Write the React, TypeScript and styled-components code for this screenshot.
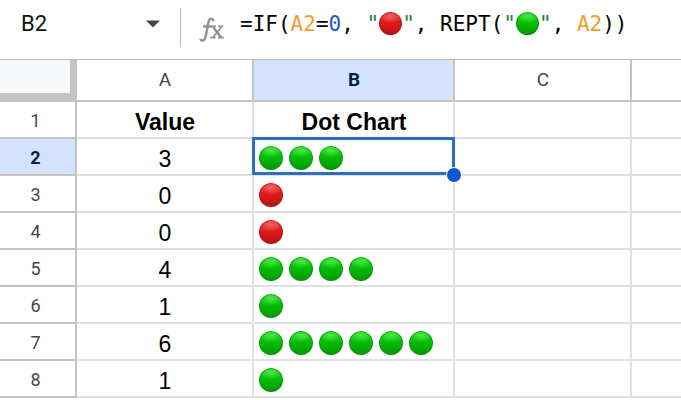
import React from 'react';
import styled, { createGlobalStyle, css } from 'styled-components';

const GlobalStyle = createGlobalStyle`
  * { box-sizing: border-box; }
  body { margin: 0; background: #fff; color: #000; overflow: hidden; font-family: "Liberation Sans", Arial, sans-serif; }
`;

const Sheet = styled.main`
  min-height: 100vh;
`;

const FormulaBar = styled.div`
  display: flex;
  align-items: center;
  height: 60px;
  padding: 0 0 12px 21px;
  border-bottom: 1px solid #bdbdbd;
`;

const NameInput = styled.input`
  width: 119px;
  height: 28px;
  padding: 0;
  border: 0;
  outline: 0;
  background: transparent;
  color: #111;
  font: 400 22px/28px Roboto, sans-serif;
`;

const MenuButton = styled.button`
  display: flex;
  align-items: center;
  justify-content: center;
  width: 26px;
  height: 26px;
  padding: 0;
  border: 0;
  background: transparent;
`;

const Divider = styled.span`
  align-self: flex-end;
  width: 1px;
  height: 39px;
  margin: 0 18px 0 14px;
  background: #bdbdbd;
`;

const FunctionIcon = styled.svg`
  flex: none;
  align-self: flex-end;
  width: 26px;
  height: 26px;
  margin: 0 15px 4px 0;
  fill: none;
  stroke: #929292;
`;

const Formula = styled.div`
  display: flex;
  align-items: center;
  flex: 1;
  min-width: 0;
  height: 28px;
  outline: 0;
  white-space: pre;
  font: 400 21px/28px "DejaVu Sans Mono", monospace;
`;

const Token = styled.span<{ $kind?: 'range' | 'number' | 'string' }>`
  color: ${({ $kind }) =>
    $kind === 'range' ? '#f09d2c' : $kind === 'number' ? '#1a56cc' : $kind === 'string' ? '#188038' : '#000'};
`;

type DotColor = 'green' | 'red';

const Dot = styled.span<{ $color: DotColor; $inline?: boolean }>`
  flex: none;
  width: ${({ $inline }) => ($inline ? 23 : 24)}px;
  height: ${({ $inline }) => ($inline ? 23 : 24)}px;
  border-radius: 50%;
  ${({ $color }) =>
    $color === 'green'
      ? css`
          background: radial-gradient(ellipse 52% 30% at 50% 18%, #48ec44, #48ec4400),
            linear-gradient(#1fc51e, #06bd06 45%, #029702);
          box-shadow: inset 0 0 0 1px #16891a99;
        `
      : css`
          background: radial-gradient(ellipse 52% 30% at 50% 18%, #f4625e, #f4625e00),
            linear-gradient(#e03531, #e01c1c 45%, #bb1010);
          box-shadow: inset 0 0 0 1px #98181899;
        `}
`;

const Grid = styled.table`
  width: 100%;
  table-layout: fixed;
  border-collapse: separate;
  border-spacing: 0;
`;

const Column = styled.col<{ $width?: number }>`
  width: ${({ $width }) => ($width ? `${$width}px` : 'auto')};
`;

const Corner = styled.td`
  height: 42px;
  padding: 0;
  background: #f8f9fb;
  border-right: 7px solid #c4c4c4;
  border-bottom: 9px solid #c4c4c4;
`;

const HeaderCell = styled.th<{ $active?: boolean }>`
  border-right: 2px solid #c4c4c4;
  border-bottom: 2px solid #c4c4c4;
  background: ${({ $active }) => ($active ? '#d3e3fd' : '#fff')};
  color: ${({ $active }) => ($active ? '#041e49' : '#444746')};
  font-family: Roboto, sans-serif;
  font-weight: ${({ $active }) => ($active ? 700 : 400)};
  line-height: 24px;

  &:last-child {
    border-right: 0;
  }
`;

const ColumnHeader = styled(HeaderCell)`
  height: 42px;
  padding: 0 0 0 1px;
  font-size: 19px;
`;

const RowHeader = styled(HeaderCell)`
  height: 37px;
  padding: 2px 4px 0 0;
  font-size: 18px;
`;

const Cell = styled.td<{ $bold?: boolean }>`
  position: relative;
  height: 37px;
  padding: 4px 0 0 1px;
  border-right: 2px solid #e1e1e1;
  border-bottom: 2px solid #e1e1e1;
  text-align: center;
  font-size: 23px;
  line-height: 26px;
  font-weight: ${({ $bold }) => ($bold ? 700 : 400)};

  &:last-child {
    border-right: 0;
  }
`;

const DotRow = styled.div`
  display: flex;
  gap: 6px;
  padding: 0 0 2px 4px;
`;

const Selection = styled.div`
  position: absolute;
  z-index: 1;
  inset: -2px -2px -1px;
  border: 3px solid #2a6fc6;
  pointer-events: none;
`;

const FillHandle = styled.span`
  position: absolute;
  right: -10px;
  bottom: -11px;
  width: 16px;
  height: 16px;
  border: 1px solid #fff;
  border-radius: 50%;
  background: #0b57d0;
`;

const values = [3, 0, 0, 4, 1, 6, 1];

function DotChart({ value }: { value: number }) {
  const color: DotColor = value === 0 ? 'red' : 'green';
  return (
    <DotRow role="img" aria-label={`${Math.max(value, 1)} ${color}`}>
      {Array.from({ length: Math.max(value, 1) }, (_, i) => (
        <Dot key={i} $color={color} />
      ))}
    </DotRow>
  );
}

export default function App() {
  return (
    <>
      <GlobalStyle />
      <Sheet>
        <FormulaBar>
          <NameInput aria-label="Name box" defaultValue="B2" />
          <MenuButton type="button" aria-label="Named ranges">
            <svg width="14" height="8" viewBox="0 0 14 8" aria-hidden="true">
              <path d="M0 .5h14L7 7.5z" fill="#444746" />
            </svg>
          </MenuButton>
          <Divider />
          <FunctionIcon viewBox="0 0 26 26" aria-hidden="true">
            <path
              d="M14.5 4.2C14 1.2 10.6.6 9.6 4.8L6.7 19.6C6 23.6 2.6 24.8 1.2 22M4 9.5h9"
              strokeWidth="2.4"
            />
            <path d="M14.2 10.2l8 10.3" strokeWidth="2.6" />
            <path d="M22.4 10.2l-8.6 10.3" strokeWidth="1.8" />
            <path d="M12 9.3h5M19.2 9.3h5M11.2 20.7h5.4M19 20.7h5.8" strokeWidth="1.8" />
          </FunctionIcon>
          <Formula role="textbox" aria-label="Formula" tabIndex={0}>
            <Token>=IF(</Token>
            <Token $kind="range">A2</Token>
            <Token>=</Token>
            <Token $kind="number">0</Token>
            <Token>, </Token>
            <Token $kind="string">"</Token>
            <Dot $color="red" $inline />
            <Token $kind="string">"</Token>
            <Token>, REPT(</Token>
            <Token $kind="string">"</Token>
            <Dot $color="green" $inline />
            <Token $kind="string">"</Token>
            <Token>, </Token>
            <Token $kind="range">A2</Token>
            <Token>))</Token>
          </Formula>
        </FormulaBar>
        <Grid>
          <colgroup>
            <Column $width={77} />
            <Column $width={177} />
            <Column $width={201} />
            <Column $width={177} />
            <Column />
          </colgroup>
          <thead>
            <tr>
              <Corner />
              <ColumnHeader scope="col">A</ColumnHeader>
              <ColumnHeader scope="col" $active>B</ColumnHeader>
              <ColumnHeader scope="col">C</ColumnHeader>
              <ColumnHeader />
            </tr>
          </thead>
          <tbody>
            <tr>
              <RowHeader scope="row">1</RowHeader>
              <Cell $bold>Value</Cell>
              <Cell $bold>Dot Chart</Cell>
              <Cell />
              <Cell />
            </tr>
            {values.map((value, i) => (
              <tr key={i}>
                <RowHeader scope="row" $active={i === 0}>{i + 2}</RowHeader>
                <Cell>{value}</Cell>
                <Cell>
                  <DotChart value={value} />
                  {i === 0 && (
                    <Selection>
                      <FillHandle />
                    </Selection>
                  )}
                </Cell>
                <Cell />
                <Cell />
              </tr>
            ))}
          </tbody>
        </Grid>
      </Sheet>
    </>
  );
}
